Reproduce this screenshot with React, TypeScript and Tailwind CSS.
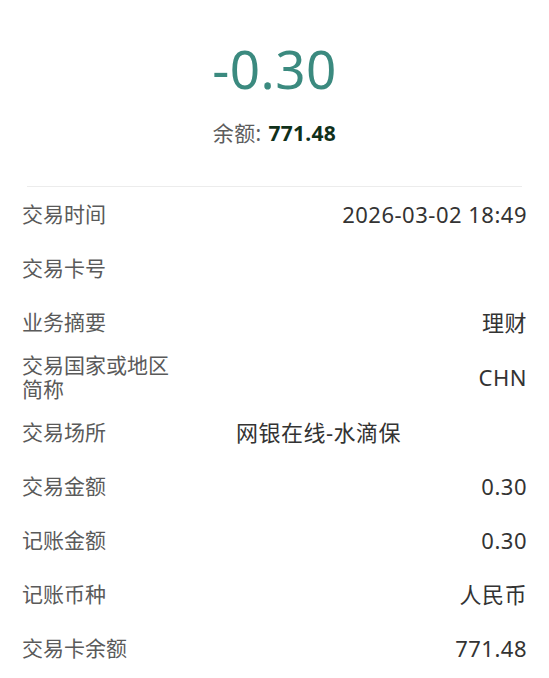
import React from "react";

const rows: { label: React.ReactNode; value: string; align?: "left" | "right"; tall?: boolean }[] = [
  { label: "交易时间", value: "2026-03-02 18:49" },
  { label: "交易卡号", value: "" },
  { label: "业务摘要", value: "理财" },
  {
    label: (
      <>
        交易国家或地区
        <br />
        简称
      </>
    ),
    value: "CHN",
    tall: true,
  },
  { label: "交易场所", value: "网银在线-水滴保", align: "left" },
  { label: "交易金额", value: "0.30" },
  { label: "记账金额", value: "0.30" },
  { label: "记账币种", value: "人民币" },
  { label: "交易卡余额", value: "771.48" },
];

const font = { fontFamily: '"Noto Sans", "Noto Sans CJK SC", sans-serif' };

export default function App() {
  return (
    <div className="w-[549px] min-h-[678px] bg-white" style={font}>
      <div className="flex flex-col items-center pt-[34px]">
        <div className="text-[53px] leading-[70px] text-[#3b8a7f] tracking-[0.5px]">-0.30</div>
        <div className="mt-[16px] flex items-center text-[21px] leading-[26px] tracking-[0.3px]">
          <span className="text-[#5c5c5c]">余额:</span>
          <span className="ml-[7px] font-bold text-[#10301a]">771.48</span>
        </div>
      </div>
      <div className="mx-[27px] mt-[40px] h-px bg-[#ececec]" />
      <div className="px-[22px]">
        {rows.map((r, i) => (
          <div
            key={i}
            className={`flex items-center ${r.tall ? "h-[56px]" : "h-[54px]"}`}
          >
            <div className="w-[214px] shrink-0 text-[21px] leading-[24px] text-[#5a5a5a]">{r.label}</div>
            <div
              className={`flex-1 text-[22px] leading-[24px] tracking-[0.5px] text-[#333333] ${
                r.align === "left" ? "text-left" : "text-right"
              }`}
            >
              {r.value}
            </div>
          </div>
        ))}
      </div>
    </div>
  );
}
